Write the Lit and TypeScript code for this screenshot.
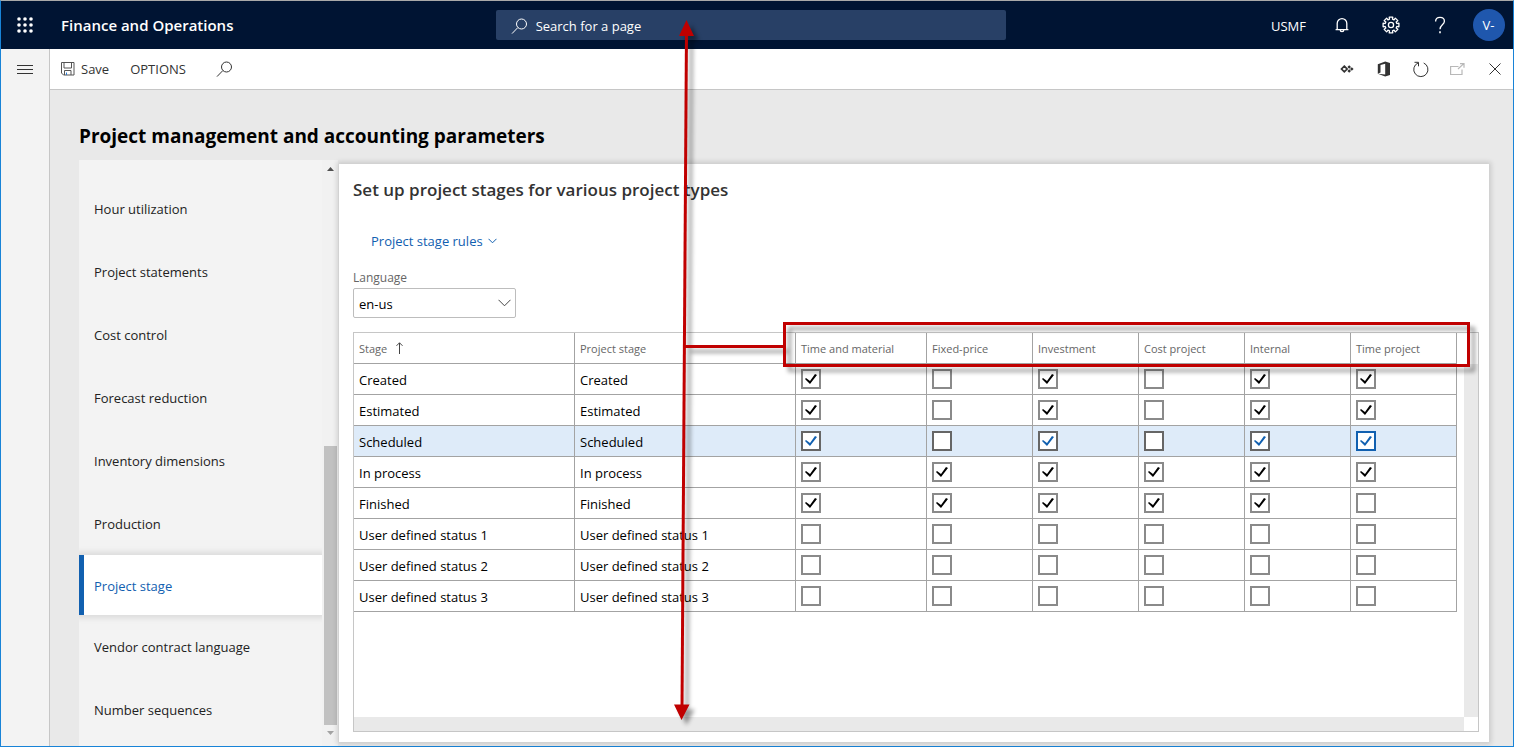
import { LitElement, html, css, svg } from "lit";
import { customElement, property, state } from "lit/decorators.js";
import { classMap } from "lit/directives/class-map.js";

const NAV_ITEMS = [
  "Hour utilization",
  "Project statements",
  "Cost control",
  "Forecast reduction",
  "Inventory dimensions",
  "Production",
  "Project stage",
  "Vendor contract language",
  "Number sequences",
];

const FLAG_COLUMNS = [
  "Time and material",
  "Fixed-price",
  "Investment",
  "Cost project",
  "Internal",
  "Time project",
];

interface StageRow {
  stage: string;
  flags: boolean[];
}

const row = (stage: string, bits: string): StageRow => ({
  stage,
  flags: [...bits].map((b) => b === "1"),
});

const ROWS: StageRow[] = [
  row("Created", "101011"),
  row("Estimated", "101011"),
  row("Scheduled", "101011"),
  row("In process", "111111"),
  row("Finished", "111110"),
  row("User defined status 1", "000000"),
  row("User defined status 2", "000000"),
  row("User defined status 3", "000000"),
];

const base = css`
  :host,
  :host * {
    box-sizing: border-box;
  }
  button,
  input,
  select {
    font: inherit;
    color: inherit;
    margin: 0;
  }
  button {
    border: 0;
    padding: 0;
    background: none;
    display: flex;
    align-items: center;
    justify-content: center;
    cursor: pointer;
  }
  a {
    color: inherit;
    text-decoration: none;
  }
  svg {
    display: block;
    flex: none;
  }
`;

/* Eight-toothed gear outline centred on 9,9. */
const gearPath = (() => {
  const pts: string[] = [];
  for (let i = 0; i < 8; i++) {
    const mid = (i * Math.PI) / 4 - Math.PI / 2;
    for (const [r, d] of [
      [6, -0.25],
      [8.1, -0.22],
      [8.1, 0.22],
      [6, 0.25],
    ]) {
      pts.push(
        `${(9 + r * Math.cos(mid + d)).toFixed(2)} ${(9 + r * Math.sin(mid + d)).toFixed(2)}`
      );
    }
  }
  return `M${pts.join("L")}Z`;
})();

const icons = {
  waffle: html`<svg width="16" height="16" viewBox="0 0 16 16" fill="currentColor">
    ${[2, 8, 14].map((y) =>
      [2, 8, 14].map((x) => svg`<circle cx=${x} cy=${y} r="1.8" />`)
    )}
  </svg>`,
  search: html`<svg width="17" height="17" viewBox="0 0 17 17" fill="none" stroke="currentColor">
    <circle cx="10.5" cy="6" r="5" />
    <path d="M6.8 9.6L1 15.6" />
  </svg>`,
  bell: html`<svg width="16" height="16" viewBox="0 0 16 16" fill="none" stroke="currentColor" stroke-width="1.3">
    <path d="M3.2 12.7V6.4a4.8 4.8 0 0 1 9.6 0v6.3M1.6 12.7h12.8M6.2 13a1.8 1.7 0 0 0 3.6 0" />
  </svg>`,
  gear: html`<svg width="18" height="18" viewBox="0 0 18 18" fill="none" stroke="currentColor" stroke-width="1.3" stroke-linejoin="round">
    <path d=${gearPath} />
    <circle cx="9" cy="9" r="2.6" />
  </svg>`,
  help: html`<svg width="12" height="18" viewBox="0 0 12 18" fill="none" stroke="currentColor" stroke-width="1.3">
    <path d="M1.6 5.4C1.6 2.8 3.4 1.3 6 1.3s4.4 1.5 4.4 3.9c0 3.4-4.4 3.9-4.4 8" />
    <path d="M6 15.2v2" stroke-width="1.6" />
  </svg>`,
  menu: html`<svg width="16" height="10" viewBox="0 0 16 10" stroke="currentColor">
    <path d="M0 .5h16M0 4.5h16M0 8.5h16" />
  </svg>`,
  save: html`<svg width="14" height="14" viewBox="0 0 14 14" fill="none" stroke="#555">
    <path d="M.5.5h12.5v12.5H2.5l-2-2zM3 .5v5.5h7.5v-5.5M3.5 13V8.5h6.5V13" />
    <path d="M5.5 10.5v2.5" stroke="#2b7cd3" />
  </svg>`,
  diamonds: html`<svg width="14" height="8" viewBox="0 0 14 8" fill="none" stroke="currentColor" stroke-width="1.7">
    <path d="M4.3 1.2L7.1 4L4.3 6.8L1.5 4Z" />
    <path d="M9.2 .2L11 2L9.2 3.8L7.4 2ZM9.2 4.2L11 6L9.2 7.8L7.4 6ZM11.8 2.2L13.6 4L11.8 5.8L10 4Z" fill="currentColor" stroke="none" />
  </svg>`,
  office: html`<svg width="14" height="16" viewBox="0 0 14 16" fill="currentColor">
    <path fill-rule="evenodd" d="M.8 3.3L8.2.5L13 2v12l-4.8 1.5L.8 12.8L8.2 13.6V2.7L3.5 3.9v7.7L.8 12.7Z" />
  </svg>`,
  refresh: html`<svg width="16" height="17" viewBox="0 0 16 17" fill="none" stroke="currentColor">
    <path d="M10.7 2A7.1 7.1 0 1 1 5 2M1.5 1.3H5.5V5.3" />
  </svg>`,
  popout: html`<svg width="15" height="12" viewBox="0 0 15 12" fill="none" stroke="currentColor" stroke-width="1.2">
    <path d="M8.5 3.5H.6v8h11.4V6.5M8 6L13.5.9M10 .7h4v4" />
  </svg>`,
  close: html`<svg width="12" height="12" viewBox="0 0 12 12" fill="none" stroke="currentColor">
    <path d="M.5.5l11 11M11.5.5l-11 11" />
  </svg>`,
};

@customElement("app-header")
class AppHeader extends LitElement {
  static styles = [
    base,
    css`
      :host {
        display: grid;
        grid-template-columns: minmax(0, 0.975fr) minmax(200px, 510px) minmax(0, 1fr);
        align-items: center;
        height: 48px;
        background: #001433;
        color: #fff;
      }
      .brand,
      .tools {
        display: flex;
        align-items: center;
      }
      .waffle {
        width: 48px;
        height: 48px;
      }
      .name {
        padding-left: 12px;
        font-size: 15px;
        font-weight: 600;
        white-space: nowrap;
      }
      .search {
        display: flex;
        align-items: center;
        gap: 8px;
        height: 30px;
        padding: 2px 15px 0;
        border-radius: 2px;
        background: #284066;
      }
      .search input {
        flex: 1;
        min-width: 0;
        border: 0;
        outline: 0;
        padding: 0;
        background: none;
        font-size: 13px;
      }
      .search input::placeholder {
        color: #fff;
        opacity: 1;
      }
      .tools {
        justify-content: flex-end;
      }
      .company {
        padding: 2px 11px 0 0;
      }
      .tool {
        width: 49px;
        height: 48px;
      }
      .avatar {
        display: grid;
        place-items: center;
        width: 32px;
        height: 32px;
        border-radius: 50%;
        background: #1f57ad;
      }
    `,
  ];

  render() {
    return html`
      <div class="brand">
        <button class="waffle" aria-label="App launcher">${icons.waffle}</button>
        <span class="name">Finance and Operations</span>
      </div>
      <label class="search">
        ${icons.search}
        <input type="text" aria-label="Search for a page" placeholder="Search for a page" />
      </label>
      <div class="tools">
        <button class="company">USMF</button>
        <button class="tool" aria-label="Notifications">${icons.bell}</button>
        <button class="tool" aria-label="Settings">${icons.gear}</button>
        <button class="tool" aria-label="Help">${icons.help}</button>
        <button class="tool" aria-label="Account"><span class="avatar">V-</span></button>
      </div>
    `;
  }
}

@customElement("action-pane")
class ActionPane extends LitElement {
  static styles = [
    base,
    css`
      :host {
        display: flex;
        align-items: center;
        height: 41px;
        padding-left: 11px;
        background: #fff;
        border-bottom: 1px solid #c6c6c6;
        color: #333;
      }
      .commands {
        display: flex;
        align-items: center;
        gap: 21px;
        flex: 1;
      }
      .save {
        gap: 6px;
      }
      .find {
        padding-left: 9px;
      }
      .icon {
        width: 37px;
        height: 40px;
      }
      .icon:disabled {
        color: #b8b8b8;
      }
    `,
  ];

  render() {
    return html`
      <div class="commands">
        <button class="save">${icons.save}Save</button>
        <button>OPTIONS</button>
        <button class="find" aria-label="Find an action">${icons.search}</button>
      </div>
      <button class="icon" aria-label="Power apps">${icons.diamonds}</button>
      <button class="icon" aria-label="Open in Microsoft Office">${icons.office}</button>
      <button class="icon" aria-label="Refresh">${icons.refresh}</button>
      <button class="icon" aria-label="Open in new window" disabled>${icons.popout}</button>
      <button class="icon" aria-label="Close">${icons.close}</button>
    `;
  }
}

@customElement("section-nav")
class SectionNav extends LitElement {
  @property() selected = "";

  static styles = [
    base,
    css`
      :host {
        display: grid;
        grid-template-columns: 1fr 16px;
        background: #f3f3f3;
      }
      .list {
        padding-top: 17px;
      }
      .item {
        display: flex;
        align-items: center;
        height: 63px;
        padding-left: 15px;
        color: #222;
      }
      .item.selected {
        height: 60px;
        padding: 2px 0 0 10px;
        border-left: 5px solid #1160b0;
        background: #fff;
        box-shadow: 0 0 6px 3px rgba(0, 0, 0, 0.1);
        clip-path: inset(-12px 0);
        color: #1160b0;
      }
      .scroll {
        display: flex;
        flex-direction: column;
        align-items: center;
        justify-content: space-between;
        background: #f1f1f1;
        padding: 7px 0 11px 1px;
      }
      .track {
        flex: 1;
        display: flex;
        flex-direction: column;
        justify-content: flex-end;
        padding: 6px 0;
      }
      .thumb {
        width: 13px;
        height: 51%;
        background: #c1c1c1;
      }
      .down {
        color: #a3a3a3;
      }
    `,
  ];

  render() {
    return html`
      <nav class="list">
        ${NAV_ITEMS.map(
          (name) => html`<a
            href="#"
            class=${classMap({ item: true, selected: name === this.selected })}
            >${name}</a
          >`
        )}
      </nav>
      <div class="scroll">
        <svg width="7" height="4" viewBox="0 0 7 4"><path d="M0 4L3.5 0L7 4Z" fill="#505050" /></svg>
        <div class="track"><div class="thumb"></div></div>
        <svg class="down" width="7" height="4" viewBox="0 0 7 4">
          <path d="M0 0L3.5 4L7 0Z" fill="currentColor" />
        </svg>
      </div>
    `;
  }
}

@customElement("stage-grid")
class StageGrid extends LitElement {
  @state() current = 2;

  static styles = [
    base,
    css`
      :host {
        display: grid;
        grid-template-columns: minmax(0, 1fr) 14px;
        grid-template-rows: 31px 1fr 14px;
        border: 1px solid #c6c6c6;
      }
      .body {
        grid-area: 1 / 1 / 3 / 2;
        overflow: hidden;
      }
      .vbar {
        grid-area: 2 / 2;
        background: #e9e9e9;
      }
      .hbar {
        grid-area: 3 / 1;
        background: #e9e9e9;
      }
      table {
        border-collapse: separate;
        border-spacing: 0;
        table-layout: fixed;
        width: 1103px;
      }
      .c-text {
        width: 221px;
      }
      .c-first {
        width: 131px;
      }
      th,
      td {
        height: 31px;
        padding: 0 5px;
        border-right: 1px solid #a3a3a3;
        border-bottom: 1px solid #a3a3a3;
        text-align: left;
        vertical-align: middle;
        color: #000;
        white-space: nowrap;
      }
      th,
      .text {
        padding-top: 2px;
      }
      th {
        font-size: 11px;
        font-weight: 400;
        color: #666;
      }
      .head {
        display: flex;
        align-items: center;
        gap: 8px;
      }
      .current td {
        background: #deebf9;
      }
      .check {
        appearance: none;
        display: grid;
        place-items: center;
        width: 20px;
        height: 20px;
        border: 2px solid #8a8a8a;
        background: #fff;
        color: #000;
      }
      .check:checked::before {
        content: "";
        width: 12px;
        height: 10px;
        background: currentColor;
        clip-path: polygon(0 5px, 1px 4px, 5px 7px, 10px 0, 12px 1px, 5px 10px);
      }
      .current .check {
        border-color: #666;
        color: #1160b0;
      }
      .current .check.focused {
        border-color: #1160b0;
      }
    `,
  ];

  render() {
    return html`
      <div class="body">
        <table>
          <colgroup>
            <col class="c-text" />
            <col class="c-text" />
            <col class="c-first" />
            <col span="5" />
          </colgroup>
          <thead>
            <tr>
              <th scope="col">
                <span class="head">
                  Stage
                  <svg width="8" height="14" viewBox="0 0 8 14" fill="none" stroke="#444">
                    <path d="M4.5 12V.8M1.5 3.8L4.5.8L7.5 3.8" />
                  </svg>
                </span>
              </th>
              <th scope="col">Project stage</th>
              ${FLAG_COLUMNS.map((c) => html`<th scope="col">${c}</th>`)}
            </tr>
          </thead>
          <tbody>
            ${ROWS.map(
              (r, i) => html`<tr class=${classMap({ current: i === this.current })}>
                <td class="text">${r.stage}</td>
                <td class="text">${r.stage}</td>
                ${r.flags.map(
                  (on, c) => html`<td>
                    <input
                      type="checkbox"
                      class=${classMap({ check: true, focused: c === 5 })}
                      aria-label="${r.stage}: ${FLAG_COLUMNS[c]}"
                      .checked=${on}
                    />
                  </td>`
                )}
              </tr>`
            )}
          </tbody>
        </table>
      </div>
      <div class="vbar"></div>
      <div class="hbar"></div>
    `;
  }
}

@customElement("app-root")
class AppRoot extends LitElement {
  static styles = [
    base,
    css`
      :host {
        position: relative;
        display: flex;
        flex-direction: column;
        min-height: 100vh;
        border: 1px solid #1883d7;
        border-top-color: #a9a9a9;
        background: #e9e9e9;
        font: 13px/20px "Open Sans", "Noto Sans", sans-serif;
        color: #222;
      }
      .shell {
        flex: 1;
        display: grid;
        grid-template-columns: 49px minmax(0, 1fr);
      }
      .rail {
        background: #f3f3f3;
        border-right: 1px solid #c6c6c6;
      }
      .menu {
        width: 48px;
        height: 41px;
        color: #333;
      }
      .workspace {
        display: flex;
        flex-direction: column;
      }
      h1 {
        margin: 0;
        padding: 32px 29px 10px;
        font-size: 19px;
        line-height: 28px;
        font-weight: 700;
        color: #000;
      }
      .content {
        flex: 1;
        display: grid;
        grid-template-columns: 259px minmax(0, 1fr);
        gap: 1px;
        padding: 0 24px 0 29px;
      }
      .card {
        display: flex;
        flex-direction: column;
        align-items: flex-start;
        margin: 4px 0;
        padding: 14px 10px 10px 14px;
        background: #fff;
        box-shadow: 0 0 5px 2px rgba(0, 0, 0, 0.14);
      }
      h2 {
        margin: 0;
        font-size: 17px;
        line-height: 24px;
        font-weight: 600;
        color: #333;
      }
      .rules {
        gap: 5px;
        margin: 29px 18px 17px;
        color: #1160b0;
      }
      .label {
        font-size: 12px;
        color: #666;
      }
      .combo {
        display: grid;
        align-items: center;
        width: 163px;
        margin-bottom: 14px;
      }
      .combo select,
      .combo svg {
        grid-area: 1 / 1;
      }
      .combo select {
        appearance: none;
        height: 30px;
        padding: 2px 5px 0;
        border: 1px solid #bdbdbd;
        border-radius: 2px;
        background: #fff;
        color: #000;
      }
      .combo svg {
        justify-self: end;
        margin-right: 5px;
        pointer-events: none;
      }
      .grid {
        flex: 1;
        align-self: stretch;
      }
      .callout {
        position: absolute;
        inset: -1px;
        pointer-events: none;
        filter: drop-shadow(5px 5px 2px rgba(0, 0, 0, 0.4));
      }
    `,
  ];

  render() {
    return html`
      <app-header></app-header>
      <div class="shell">
        <div class="rail">
          <button class="menu" aria-label="Expand the navigation pane">${icons.menu}</button>
        </div>
        <div class="workspace">
          <action-pane></action-pane>
          <h1>Project management and accounting parameters</h1>
          <div class="content">
            <section-nav selected="Project stage"></section-nav>
            <main class="card">
              <h2>Set up project stages for various project types</h2>
              <button class="rules">
                Project stage rules
                <svg width="9" height="6" viewBox="0 0 9 6" fill="none" stroke="currentColor">
                  <path d="M.5.8L4.5 4.8L8.5.8" />
                </svg>
              </button>
              <label class="label" for="language">Language</label>
              <div class="combo">
                <select id="language">
                  <option>en-us</option>
                </select>
                <svg width="13" height="8" viewBox="0 0 13 8" fill="none" stroke="#444">
                  <path d="M.5.8L6.5 6.8L12.5.8" />
                </svg>
              </div>
              <stage-grid class="grid"></stage-grid>
            </main>
          </div>
        </div>
      </div>
      <svg class="callout" width="1514" height="747" viewBox="0 0 1514 747" fill="none" stroke="#c00000" stroke-width="3">
        <path d="M686.5 30L682 708" />
        <path d="M684.5 346.5H784" />
        <rect x="784.5" y="323.5" width="684" height="42" />
        <path d="M686.5 20L694 36H679ZM681.5 720L674 704.5H689.5Z" fill="#c00000" stroke="none" />
      </svg>
    `;
  }
}
